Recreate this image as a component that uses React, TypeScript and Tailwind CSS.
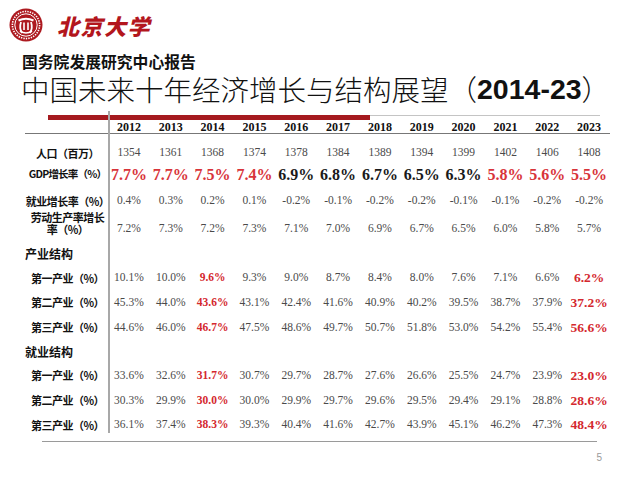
import React from "react";

type Cell = { v: string; tone?: "red" | "redBig" | "dark" };

type Row = {
  label: string;
  label2?: string;
  section?: boolean;
  big?: boolean;
  h: string;
  cells: Cell[];
};

const years = ["2012", "2013", "2014", "2015", "2016", "2017", "2018", "2019", "2020", "2021", "2022", "2023"];

const plain = (vals: string[], redAt: number[] = [], bigAt: number[] = []): Cell[] =>
  vals.map((v, i) => ({ v, tone: bigAt.includes(i) ? "redBig" : redAt.includes(i) ? "red" : undefined }));

const rows: Row[] = [
  {
    label: "人口（百万）",
    h: "h-[22px] mt-[8px]",
    cells: plain(["1354", "1361", "1368", "1374", "1378", "1384", "1389", "1394", "1399", "1402", "1406", "1408"]),
  },
  {
    label: "GDP增长率（%）",
    big: true,
    h: "h-[21px]",
    cells: ["7.7%", "7.7%", "7.5%", "7.4%", "6.9%", "6.8%", "6.7%", "6.5%", "6.3%", "5.8%", "5.6%", "5.5%"].map((v, i) => ({
      v,
      tone: i < 4 || i > 8 ? "red" : "dark",
    })),
  },
  {
    label: "就业增长率（%）",
    h: "h-[24px] mt-[4px]",
    cells: plain(["0.4%", "0.3%", "0.2%", "0.1%", "-0.2%", "-0.1%", "-0.2%", "-0.2%", "-0.1%", "-0.1%", "-0.2%", "-0.2%"]),
  },
  {
    label: "劳动生产率增长",
    label2: "率（%）",
    h: "h-[24px] mt-[4px]",
    cells: plain(["7.2%", "7.3%", "7.2%", "7.3%", "7.1%", "7.0%", "6.9%", "6.7%", "6.5%", "6.0%", "5.8%", "5.7%"]),
  },
  { label: "产业结构", section: true, h: "h-[24px] mt-[1px]", cells: [] },
  {
    label: "第一产业（%）",
    h: "h-[24px]",
    cells: plain(["10.1%", "10.0%", "9.6%", "9.3%", "9.0%", "8.7%", "8.4%", "8.0%", "7.6%", "7.1%", "6.6%", "6.2%"], [2], [11]),
  },
  {
    label: "第二产业（%）",
    h: "h-[25px]",
    cells: plain(["45.3%", "44.0%", "43.6%", "43.1%", "42.4%", "41.6%", "40.9%", "40.2%", "39.5%", "38.7%", "37.9%", "37.2%"], [2], [11]),
  },
  {
    label: "第三产业（%）",
    h: "h-[25px]",
    cells: plain(["44.6%", "46.0%", "46.7%", "47.5%", "48.6%", "49.7%", "50.7%", "51.8%", "53.0%", "54.2%", "55.4%", "56.6%"], [2], [11]),
  },
  { label: "就业结构", section: true, h: "h-[23px]", cells: [] },
  {
    label: "第一产业（%）",
    h: "h-[25px]",
    cells: plain(["33.6%", "32.6%", "31.7%", "30.7%", "29.7%", "28.7%", "27.6%", "26.6%", "25.5%", "24.7%", "23.9%", "23.0%"], [2], [11]),
  },
  {
    label: "第二产业（%）",
    h: "h-[25px]",
    cells: plain(["30.3%", "29.9%", "30.0%", "30.0%", "29.9%", "29.7%", "29.6%", "29.5%", "29.4%", "29.1%", "28.8%", "28.6%"], [2], [11]),
  },
  {
    label: "第三产业（%）",
    h: "h-[24px]",
    cells: plain(["36.1%", "37.4%", "38.3%", "39.3%", "40.4%", "41.6%", "42.7%", "43.9%", "45.1%", "46.2%", "47.3%", "48.4%"], [2], [11]),
  },
];

function PkuLogo() {
  return (
    <svg width="34" height="34" viewBox="0 0 34 34">
      <circle cx="17" cy="17" r="16.5" fill="#ad1a20" />
      <circle cx="17" cy="17" r="13.6" fill="none" stroke="#fff" strokeWidth="1.6" strokeDasharray="1.4 1.1" />
      <circle cx="17" cy="17" r="11.2" fill="none" stroke="#fff" strokeWidth="1" />
      <path d="M9.5 12.5 Q17 9 24.5 12.5" stroke="#fff" strokeWidth="2" fill="none" />
      <path d="M12 14 Q10 20 13 25" stroke="#fff" strokeWidth="1.8" fill="none" />
      <path d="M22 14 Q24 20 21 25" stroke="#fff" strokeWidth="1.8" fill="none" />
      <path d="M15 14.5 L15 22 M19 14.5 L19 22" stroke="#fff" strokeWidth="1.6" />
      <path d="M11 23 Q17 27 23 23" stroke="#fff" strokeWidth="1.6" fill="none" />
    </svg>
  );
}

function ValueCell({ cell, big }: { cell: Cell; big?: boolean }) {
  let cls = "text-[11.5px] text-[#4a4a4a]";
  if (big) {
    cls = cell.tone === "red" ? "text-[16px] font-bold text-[#d8343a]" : "text-[16px] font-bold text-[#1a1a1a]";
  } else if (cell.tone === "red") {
    cls = "text-[11.5px] font-bold text-[#d4282e]";
  } else if (cell.tone === "redBig") {
    cls = "text-[13.5px] font-bold text-[#d4282e]";
  }
  return (
    <div className={`flex items-center justify-center whitespace-nowrap leading-none ${cls}`}>{cell.v}</div>
  );
}

export default function App() {
  return (
    <div className="w-[640px] h-[480px] overflow-hidden bg-white font-['Liberation_Serif','Noto_Sans_CJK_SC',serif] text-black">
      <div className="flex h-[48px] items-center gap-[14px] pl-[9px] pt-[2px]">
        <PkuLogo />
        <span className="font-['Noto_Sans_CJK_SC',sans-serif] text-[22px] font-black italic leading-none tracking-[1.5px] text-[#b3161d]">
          北京大学
        </span>
      </div>

      <div className="mt-[6px] pl-[22px] font-['Noto_Sans_CJK_SC',sans-serif] text-[15.8px] font-bold leading-[16px] text-[#111]">
        国务院发展研究中心报告
      </div>
      <div className="mt-[5px] flex items-center pl-[21px] text-[28.5px] leading-[28px] text-[#111]">
        <span className="font-['Noto_Sans_CJK_SC',sans-serif] font-light">中国未来十年经济增长与结构展望（</span>
        <span className="font-['Liberation_Sans',sans-serif] font-bold">2014-23</span>
        <span className="font-['Noto_Sans_CJK_SC',sans-serif] font-light">）</span>
      </div>

      <div className="relative mt-[8px]">
        <div className="absolute left-[107.5px] top-0 h-[322px] w-[2px] bg-[#a8a8a8]" />
        <div className="flex items-start pl-[48px] pt-[4px]">
          <div className="h-[5px] w-[322px] bg-[#a51a1f]" />
          <div className="h-px w-[230px] bg-[#c4c4c4]" />
        </div>

        <div className="ml-[25px] w-[585px]">
          <div className="flex h-[14px] border-b border-[#777] pt-[1px]">
            <div className="w-[83px]" />
            <div className="grid flex-1 grid-cols-12">
              {years.map((y) => (
                <div key={y} className="text-center text-[12px] font-bold leading-[12px] text-[#111]">
                  {y}
                </div>
              ))}
            </div>
          </div>

          {rows.map((r, i) => (
            <div key={i} className={`flex ${r.h}`}>
              {r.section ? (
                <div className="flex w-[83px] items-center font-['Noto_Sans_CJK_SC',sans-serif] text-[12px] font-bold leading-none text-[#111]">
                  {r.label}
                </div>
              ) : (
                <div
                  className={`flex w-[83px] flex-col items-center justify-center pl-[2px] font-['Noto_Sans_CJK_SC',sans-serif] font-bold text-[#111] ${
                    r.label2 ? "pb-[12px] leading-[12px]" : "leading-none"
                  } ${r.label.startsWith("GDP") ? "text-[10.5px] tracking-[-0.8px]" : "text-[11px] tracking-[-0.5px]"}`}
                >
                  <span className="whitespace-nowrap">{r.label}</span>
                  {r.label2 ? <span className="whitespace-nowrap">{r.label2}</span> : null}
                </div>
              )}
              <div className="grid flex-1 grid-cols-12">
                {r.cells.map((c, j) => (
                  <ValueCell key={j} cell={c} big={r.big} />
                ))}
              </div>
            </div>
          ))}
        </div>

        <div className="ml-[42px] mt-[4px] h-px w-[555px] bg-[#9a9a9a]" />
      </div>

      <div className="mt-[11px] pr-[38px] text-right font-['Liberation_Sans',sans-serif] text-[10px] leading-none text-[#9a9a9a]">
        5
      </div>
    </div>
  );
}
